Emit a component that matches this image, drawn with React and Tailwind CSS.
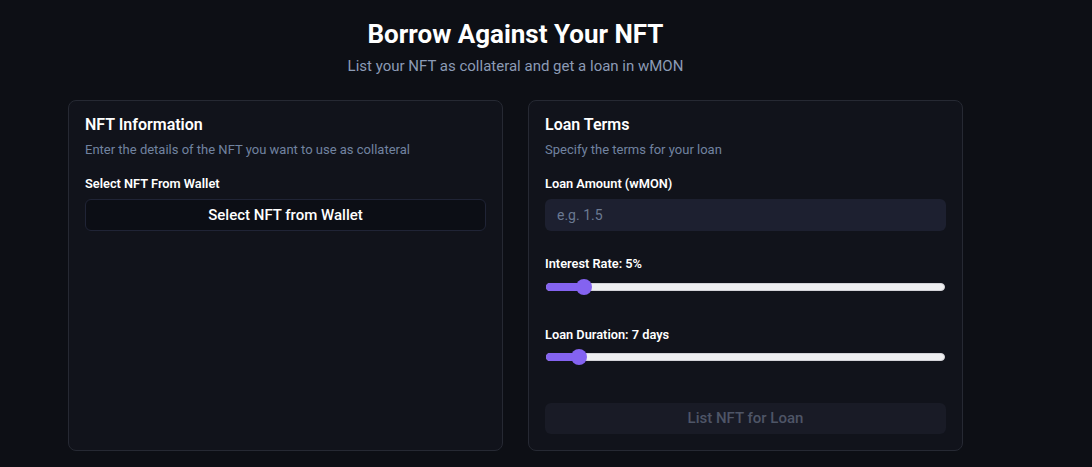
import React from "react";

function Slider({ pct }) {
  return (
    <div className="relative h-4 w-full">
      <div className="absolute left-px right-px top-[4px] h-2 rounded-full border border-[#d3d3d8] bg-[#efeff1]" />
      <div
        className="absolute left-px top-[4px] h-2 rounded-l-full bg-[#8463f0]"
        style={{ width: `${pct}px` }}
      />
      <div
        className="absolute top-0 h-4 w-4 rounded-full bg-[#8463f0]"
        style={{ left: `${pct - 7}px` }}
      />
    </div>
  );
}

export default function App() {
  return (
    <div
      className="min-h-screen bg-[#0d0f15] text-white"
      style={{ fontFamily: "Roboto, 'Noto Sans', sans-serif" }}
    >
      <div className="ml-[68px] w-[895px] pt-[16px]">
        <h1 className="text-center text-[26px] font-bold leading-[36px] text-white">
          Borrow Against Your NFT
        </h1>
        <p className="mt-[2px] text-center text-[15px] leading-6 text-[#8c9bb5]">
          List your NFT as collateral and get a loan in wMON
        </p>

        <div className="mt-[22px] grid grid-cols-2 gap-[25px]">
          <div className="h-[351px] rounded-lg border border-[#262933] bg-[#11131b] px-4 pt-[10px] pb-4">
            <h2 className="text-base font-semibold leading-7 text-white">NFT Information</h2>
            <p className="mt-[1px] text-[13px] leading-5 text-[#7183a0]">
              Enter the details of the NFT you want to use as collateral
            </p>
            <div className="mt-4 text-[12.8px] font-semibold leading-4 text-white">Select NFT From Wallet</div>
            <button className="mt-[7px] flex h-8 w-full items-center justify-center rounded-md border border-[#202436] bg-[#0c0e15] text-[15px] font-medium text-white">
              Select NFT from Wallet
            </button>
          </div>

          <div className="flex h-[351px] flex-col rounded-lg border border-[#262933] bg-[#11131b] px-4 pt-[10px] pb-4">
            <h2 className="text-base font-semibold leading-7 text-white">Loan Terms</h2>
            <p className="mt-[1px] text-[13px] leading-5 text-[#7183a0]">Specify the terms for your loan</p>
            <div className="mt-4 text-[12.8px] font-semibold leading-4 text-white">Loan Amount (wMON)</div>
            <div className="mt-[7px] flex h-8 w-full items-center rounded-md bg-[#1d2030] px-3 text-sm text-[#6b7a93]">
              e.g. 1.5
            </div>
            <div className="mt-[25px] text-[12.8px] font-semibold leading-4 text-white">Interest Rate: 5%</div>
            <div className="mt-[7px]">
              <Slider pct={38} />
            </div>
            <div className="mt-[32px] text-[12.8px] font-semibold leading-4 text-white">Loan Duration: 7 days</div>
            <div className="mt-[6px]">
              <Slider pct={33} />
            </div>
            <button className="mt-[38px] flex h-8 w-full items-center justify-center rounded-md bg-[#191b26] text-[15px] font-medium text-[#4e5566]">
              List NFT for Loan
            </button>
          </div>
        </div>
      </div>
    </div>
  );
}
